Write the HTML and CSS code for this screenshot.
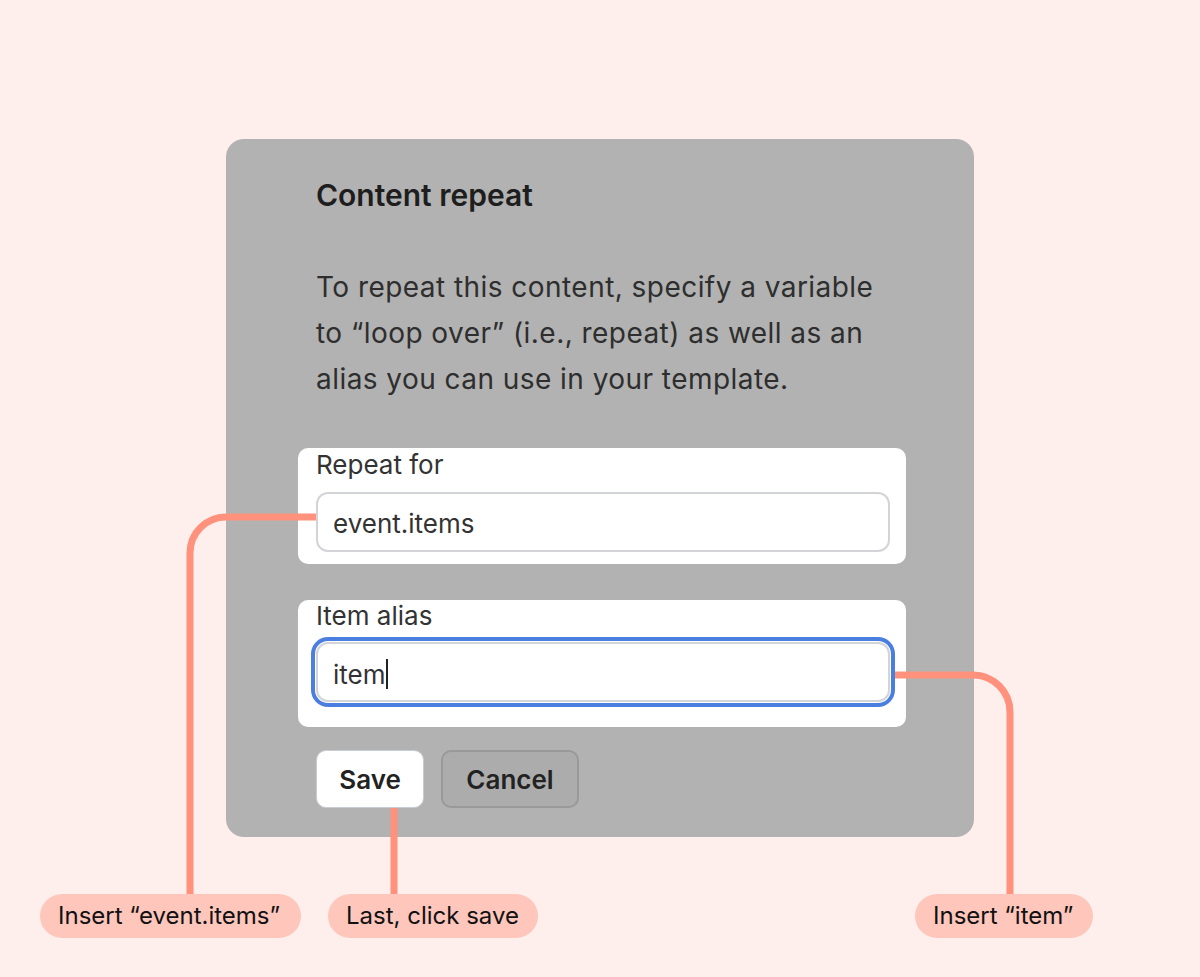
FILE: index.html
```html
<!DOCTYPE html>
<html lang="en">
<head>
<meta charset="utf-8">
<title>Content repeat</title>
<link rel="stylesheet" href="styles.css">
</head>
<body>
<div class="page">
  <div class="card">
    <h1 class="title">Content repeat</h1>
    <p class="desc">To repeat this content, specify a variable to “loop over” (i.e., repeat) as well as an alias you can use in your template.</p>
    <div class="field">
      <div class="label">Repeat for</div>
      <div class="input">event.items</div>
    </div>
    <div class="field field-focus">
      <div class="label">Item alias</div>
      <div class="input focused">item<span class="caret"></span></div>
    </div>
    <div class="actions">
      <button class="btn btn-save">Save</button>
      <button class="btn btn-cancel">Cancel</button>
    </div>
  </div>

  <svg class="connectors" width="1200" height="977" viewBox="0 0 1200 977">
    <path d="M316 517 H226 A36 36 0 0 0 190 553 V896" />
    <path d="M394 808 V896" />
    <path d="M895 675 H973 A37 37 0 0 1 1010 712 V896" />
  </svg>

  <div class="pill pill-a">Insert “event.items”</div>
  <div class="pill pill-b">Last, click save</div>
  <div class="pill pill-c">Insert “item”</div>
</div>
</body>
</html>
```

FILE: styles.css
```css
* { box-sizing: border-box; }
html, body {
  margin: 0;
  padding: 0;
  background: #ffefec;
}
body {
  font-family: Inter, "Noto Sans", "Liberation Sans", sans-serif;
  color: #222;
}
.page {
  position: relative;
  width: 1200px;
  height: 977px;
  padding-top: 139px;
  overflow: hidden;
}
.card {
  margin-left: 226px;
  width: 748px;
  height: 698px;
  background: #b2b2b2;
  border-radius: 18px;
  padding: 40px 68px 0 72px;
  display: flex;
  flex-direction: column;
}
.title {
  margin: 0;
  padding-left: 18px;
  font-size: 30px;
  line-height: 32px;
  font-weight: 600;
  color: #1e1e1e;
}
.desc {
  margin: 53px 0 0;
  padding-left: 18px;
  padding-right: 20px;
  font-size: 28px;
  letter-spacing: 0.45px;
  line-height: 46px;
  color: #2e2e2e;
}
.field {
  margin-top: 46px;
  width: 608px;
  background: #fff;
  border-radius: 10px;
  padding: 3px 16px 12px 18px;
}
.field-focus {
  margin-top: 36px;
  padding-top: 2px;
  padding-bottom: 25px;
}
.label {
  font-size: 26px;
  line-height: 28px;
  color: #333;
}
.input {
  margin-top: 13px;
  height: 60px;
  border: 2px solid #d2d4d8;
  border-radius: 12px;
  padding: 2px 15px 0;
  display: flex;
  align-items: center;
  font-size: 26px;
  color: #333;
  background: #fff;
}
.field-focus .input { margin-top: 12px; padding-top: 4px; }
.focused {
  box-shadow: 0 0 0 1px #fff, 0 0 0 5px #4a7fe0;
}
.caret {
  display: inline-block;
  width: 2px;
  height: 30px;
  background: #222;
  margin-left: 1px;
}
.actions {
  margin-top: 23px;
  padding-left: 18px;
  display: flex;
  gap: 17px;
}
.btn {
  height: 58px;
  border-radius: 10px;
  font-family: inherit;
  font-size: 26px;
  font-weight: 600;
  color: #222;
  padding: 0;
}
.btn-save {
  width: 108px;
  background: #fff;
  border: 1px solid #c8cdd3;
}
.btn-cancel {
  width: 138px;
  background: #acacac;
  border: 2px solid #999;
}
.connectors {
  position: absolute;
  left: 0;
  top: 0;
  pointer-events: none;
}
.connectors path {
  fill: none;
  stroke: #ff917d;
  stroke-width: 7;
}
.pill {
  position: absolute;
  top: 894px;
  height: 44px;
  border-radius: 22px;
  background: #ffc6bc;
  color: #111;
  font-size: 24px;
  line-height: 44px;
  padding: 0 18px;
  white-space: nowrap;
}
.pill-a { left: 40px; width: 261px; }
.pill-b { left: 328px; width: 210px; }
.pill-c { left: 915px; width: 178px; }
```
